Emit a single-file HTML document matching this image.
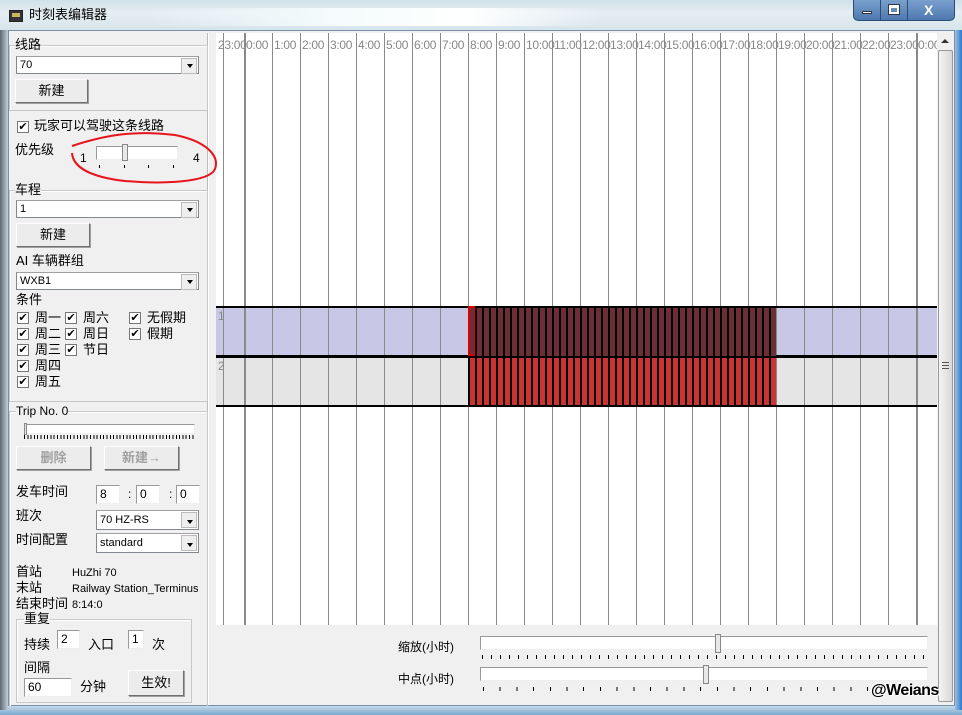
<!DOCTYPE html>
<html><head><meta charset="utf-8"><style>
*{margin:0;padding:0;box-sizing:border-box}
body{width:962px;height:715px;overflow:hidden;position:relative;background:#6a8fb8;font-family:"Liberation Sans","Noto Sans CJK SC",sans-serif;font-size:12px;color:#000}
.a{position:absolute}
.t{position:absolute;white-space:nowrap;line-height:14px}
.grp{position:absolute;border:1px solid #c8c8c8;box-shadow:inset 1px 1px #fff}
.combo{position:absolute;background:#fff;border:1px solid #828790;border-top-color:#a0a0a0;height:18px;font-size:11px;padding:1px 3px;line-height:14px}
.combo:after{content:"";position:absolute;right:1px;top:1px;width:14px;height:14px;background:#eee;border:1px solid #bbb}
.combo b{position:absolute;right:5px;top:7px;border:3px solid transparent;border-top:4px solid #000;z-index:2}
.btn{position:absolute;background:#ececec;border:1px solid #707070;border-top-color:#fff;border-left-color:#fff;box-shadow:1px 1px #a0a0a0;text-align:center;font-size:13px}
.cb{position:absolute;width:12px;height:12px;border:1px solid #777;background:#fff;font-size:11px;line-height:10px;text-align:center}
.cb:before{content:"✔";}
.edit{position:absolute;background:#fff;border:1px solid #999;border-right-color:#eee;border-bottom-color:#eee;font-size:12px;padding-left:3px;line-height:16px}
.hl{position:absolute;top:38px;font-size:12px;color:#888;letter-spacing:-0.3px}
</style></head><body>
<!-- title bar -->
<div class="a" style="left:0;top:0;width:962px;height:32px;background:linear-gradient(#cfe0ea,#e6eef2 40%,#d4e4ea)"></div>
<div class="a" style="left:150px;top:8px;width:450px;height:18px;background:linear-gradient(90deg,rgba(255,255,255,0),#f4fbfc 40%,#ffffff 70%,rgba(255,255,255,0));"></div>
<div class="a" style="left:9px;top:10px;width:14px;height:12px;background:#333;border:1px solid #222"><div class="a" style="left:2px;top:2px;width:8px;height:4px;background:#c9b460"></div></div>
<div class="t" style="left:29px;top:8px;font-size:13px">时刻表编辑器</div>
<div class="a" style="left:853px;top:0;width:102px;height:21px;background:linear-gradient(#7aa0cc,#4d78b0);border:1px solid #2c4c78;border-top:none;border-radius:0 0 5px 5px"></div>
<div class="a" style="left:880px;top:0;width:1px;height:20px;background:#2c4c78"></div>
<div class="a" style="left:907px;top:0;width:1px;height:20px;background:#2c4c78"></div>
<div class="a" style="left:862px;top:11px;width:10px;height:3px;background:#fff;border:1px solid #334"></div>
<div class="a" style="left:889px;top:5px;width:10px;height:9px;border:2px solid #fff;border-top-width:3px;outline:1px solid #334"></div>
<div class="t" style="left:924px;top:3px;color:#fff;font-weight:bold;font-size:14px">X</div>
<!-- client -->
<div class="a" style="left:8px;top:30px;width:947px;height:676px;background:#f0f0f0;border:1px solid #7a8fa8"></div>
<div class="a" style="left:0;top:706px;width:962px;height:9px;background:linear-gradient(#c9dbe8,#7aa6d0)"></div>
<div class="a" style="left:955px;top:30px;width:7px;height:680px;background:linear-gradient(90deg,#9ec0e0,#2a78d0)"></div>
<div class="a" style="left:0;top:30px;width:8px;height:680px;background:linear-gradient(90deg,#606870,#bfcfdc)"></div>

<!-- chart -->
<div class="a" style="left:216px;top:33px;width:721px;height:592px;background:#fff;overflow:hidden">
  <div class="a" style="left:0;top:274px;width:721px;height:50px;background:#c8c8e6"></div>
  <div class="a" style="left:0;top:324px;width:721px;height:49px;background:#e5e5e5"></div>
  <div class="a" style="left:0;top:0;width:721px;height:592px;background:repeating-linear-gradient(90deg,#8a8a8a 0 1px,transparent 1px 28px);background-position:28px 0"></div>
  <div class="a" style="left:28px;top:0;width:2px;height:592px;background:#8a8a8a"></div>
  <div class="a" style="left:700px;top:0;width:2px;height:592px;background:#8a8a8a"></div>
  <div class="a" style="left:0;top:0;width:721px;height:20px;background:#fff"></div>
  <div class="a" style="left:0;top:273px;width:721px;height:2px;background:#000"></div>
  <div class="a" style="left:0;top:322px;width:721px;height:3px;background:#000"></div>
  <div class="a" style="left:0;top:372px;width:721px;height:2px;background:#000"></div>
  <div class="a" style="left:252px;top:275px;width:308px;height:48px;background:repeating-linear-gradient(90deg,#000 0 2px,#6b2f35 2px 7px)"></div>
  <div class="a" style="left:252px;top:325px;width:308px;height:47px;background:repeating-linear-gradient(90deg,#000 0 2px,#cc3333 2px 7px)"></div>
  <div class="a" style="left:252px;top:273px;width:7px;height:50px;border:2px solid #d00;border-right-width:1px"></div>
  <div class="t" style="left:2px;top:276px;color:#888">1</div>
  <div class="t" style="left:2px;top:326px;color:#888">2</div>
</div>
<div class="a" style="left:216px;top:33px;width:721px;height:20px;overflow:hidden;background:#fff">
<div class="hl" style="left:2px;top:5px">23:00</div><div class="hl" style="left:30px;top:5px">0:00</div><div class="hl" style="left:58px;top:5px">1:00</div><div class="hl" style="left:86px;top:5px">2:00</div><div class="hl" style="left:114px;top:5px">3:00</div><div class="hl" style="left:142px;top:5px">4:00</div><div class="hl" style="left:170px;top:5px">5:00</div><div class="hl" style="left:198px;top:5px">6:00</div><div class="hl" style="left:226px;top:5px">7:00</div><div class="hl" style="left:254px;top:5px">8:00</div><div class="hl" style="left:282px;top:5px">9:00</div><div class="hl" style="left:310px;top:5px">10:00</div><div class="hl" style="left:338px;top:5px">11:00</div><div class="hl" style="left:366px;top:5px">12:00</div><div class="hl" style="left:394px;top:5px">13:00</div><div class="hl" style="left:422px;top:5px">14:00</div><div class="hl" style="left:450px;top:5px">15:00</div><div class="hl" style="left:478px;top:5px">16:00</div><div class="hl" style="left:506px;top:5px">17:00</div><div class="hl" style="left:534px;top:5px">18:00</div><div class="hl" style="left:562px;top:5px">19:00</div><div class="hl" style="left:590px;top:5px">20:00</div><div class="hl" style="left:618px;top:5px">21:00</div><div class="hl" style="left:646px;top:5px">22:00</div><div class="hl" style="left:674px;top:5px">23:00</div><div class="hl" style="left:702px;top:5px">0:00</div>
<div class="a" style="left:0;top:0;width:721px;height:20px;background:repeating-linear-gradient(90deg,#8a8a8a 0 1px,transparent 1px 28px);background-position:28px 0"></div>
<div class="a" style="left:28px;top:0;width:2px;height:20px;background:#8a8a8a"></div><div class="a" style="left:700px;top:0;width:2px;height:20px;background:#8a8a8a"></div>
</div>
<!-- scrollbar -->
<div class="a" style="left:937px;top:33px;width:17px;height:672px;background:#f0f0f0"></div>
<div class="a" style="left:941px;top:39px;border:4px solid transparent;border-bottom:4px solid #333;border-top:none"></div>
<div class="a" style="left:938px;top:50px;width:15px;height:652px;background:linear-gradient(90deg,#f4f4f4,#d8d8d8);border:1px solid #999;border-radius:2px"></div>
<div class="a" style="left:942px;top:362px;width:7px;height:7px;border-top:1px solid #555;border-bottom:1px solid #555"><div class="a" style="left:0;top:2px;width:7px;height:1px;background:#555"></div></div>

<!-- bottom panel -->
<div class="t" style="left:398px;top:640px">缩放(小时)</div>
<div class="a" style="left:480px;top:636px;width:448px;height:14px;background:#fff;border:1px solid #999;border-right-color:#eee;border-bottom-color:#eee"></div>
<div class="a" style="left:715px;top:634px;width:6px;height:19px;background:#e8e8e8;border:1px solid #888"></div>
<div class="a" style="left:482px;top:655px;width:445px;height:4px;background:repeating-linear-gradient(90deg,#000 0 1px,transparent 1px 9px)"></div>
<div class="t" style="left:398px;top:672px">中点(小时)</div>
<div class="a" style="left:480px;top:667px;width:448px;height:14px;background:#fff;border:1px solid #999;border-right-color:#eee;border-bottom-color:#eee"></div>
<div class="a" style="left:703px;top:665px;width:6px;height:19px;background:#e8e8e8;border:1px solid #888"></div>
<div class="a" style="left:483px;top:687px;width:400px;height:4px;background:repeating-linear-gradient(90deg,#000 0 1px,transparent 1px 16.7px)"></div>
<div class="t" style="left:871px;top:684px;font-size:16px;font-weight:bold;letter-spacing:-0.5px;color:#000;text-shadow:1px 1px #fff,-1px -1px #fff">@Weians</div>

<!-- left panel -->
<div class="a" style="left:207px;top:33px;width:2px;height:672px;border-left:1px solid #bbb;border-right:1px solid #fff"></div>
<div class="grp" style="left:9px;top:45px;width:199px;height:66px"></div>
<div class="t" style="left:15px;top:38px;background:#f0f0f0;font-size:13px">线路</div>
<div class="combo" style="left:16px;top:56px;width:183px">70<b></b></div>
<div class="btn" style="left:15px;top:79px;width:73px;height:24px;line-height:21px">新建</div>
<div class="cb" style="left:17px;top:121px"></div>
<div class="t" style="left:34px;top:119px;font-size:13px">玩家可以驾驶这条线路</div>
<div class="t" style="left:15px;top:143px;font-size:13px">优先级</div>
<div class="t" style="left:80px;top:151px">1</div>
<div class="a" style="left:96px;top:146px;width:82px;height:14px;background:#fff;border:1px solid #999;border-right-color:#eee;border-bottom-color:#eee"></div>
<div class="a" style="left:122px;top:144px;width:6px;height:17px;background:#e8e8e8;border:1px solid #888"></div>
<div class="a" style="left:99px;top:165px;width:1px;height:3px;background:#000"></div><div class="a" style="left:124px;top:165px;width:1px;height:3px;background:#000"></div><div class="a" style="left:148px;top:165px;width:1px;height:3px;background:#000"></div><div class="a" style="left:173px;top:165px;width:1px;height:3px;background:#000"></div>
<div class="t" style="left:193px;top:151px">4</div>
<svg class="a" style="left:65px;top:125px" width="155" height="62"><path d="M7 21 C40 10,70 5,110 10 C140 16,155 30,150 44 C144 58,95 59,60 56 C25 52,8 42,7 28" fill="none" stroke="#e8141c" stroke-width="2"/></svg>

<div class="grp" style="left:9px;top:190px;width:199px;height:212px"></div>
<div class="t" style="left:15px;top:183px;background:#f0f0f0;font-size:13px">车程</div>
<div class="combo" style="left:16px;top:200px;width:183px">1<b></b></div>
<div class="btn" style="left:16px;top:223px;width:74px;height:24px;line-height:21px">新建</div>
<div class="t" style="left:16px;top:254px;font-size:13px">AI 车辆群组</div>
<div class="combo" style="left:16px;top:272px;width:183px">WXB1<b></b></div>
<div class="t" style="left:16px;top:293px;font-size:13px">条件</div>
<div class="cb" style="left:17px;top:312px"></div><div class="t" style="left:35px;top:311px;font-size:13px">周一</div>
<div class="cb" style="left:65px;top:312px"></div><div class="t" style="left:83px;top:311px;font-size:13px">周六</div>
<div class="cb" style="left:129px;top:312px"></div><div class="t" style="left:147px;top:311px;font-size:13px">无假期</div>
<div class="cb" style="left:17px;top:328px"></div><div class="t" style="left:35px;top:327px;font-size:13px">周二</div>
<div class="cb" style="left:65px;top:328px"></div><div class="t" style="left:83px;top:327px;font-size:13px">周日</div>
<div class="cb" style="left:129px;top:328px"></div><div class="t" style="left:147px;top:327px;font-size:13px">假期</div>
<div class="cb" style="left:17px;top:344px"></div><div class="t" style="left:35px;top:343px;font-size:13px">周三</div>
<div class="cb" style="left:65px;top:344px"></div><div class="t" style="left:83px;top:343px;font-size:13px">节日</div>
<div class="cb" style="left:17px;top:360px"></div><div class="t" style="left:35px;top:359px;font-size:13px">周四</div>
<div class="cb" style="left:17px;top:376px"></div><div class="t" style="left:35px;top:375px;font-size:13px">周五</div>

<div class="grp" style="left:9px;top:411px;width:199px;height:295px;border-bottom:none"></div>
<div class="t" style="left:16px;top:404px;background:#f0f0f0">Trip No. 0</div>
<div class="a" style="left:24px;top:424px;width:171px;height:10px;background:#fff;border:1px solid #999;border-right-color:#eee;border-bottom-color:#eee"></div>
<div class="a" style="left:24px;top:423px;width:3px;height:12px;background:#e8e8e8;border:1px solid #888"></div>
<div class="a" style="left:24px;top:435px;width:171px;height:4px;background:repeating-linear-gradient(90deg,#000 0 1px,transparent 1px 3.3px)"></div>
<div class="btn" style="left:16px;top:446px;width:75px;height:24px;line-height:21px;color:#a0a0a0;font-weight:bold">删除</div>
<div class="btn" style="left:104px;top:446px;width:75px;height:24px;line-height:21px;color:#a0a0a0;font-weight:bold">新建→</div>
<div class="t" style="left:16px;top:485px;font-size:13px">发车时间</div>
<div class="edit" style="left:96px;top:485px;width:24px;height:19px">8</div>
<div class="t" style="left:128px;top:487px">:</div>
<div class="edit" style="left:136px;top:485px;width:24px;height:19px">0</div>
<div class="t" style="left:169px;top:487px">:</div>
<div class="edit" style="left:176px;top:485px;width:24px;height:19px">0</div>
<div class="t" style="left:16px;top:509px;font-size:13px">班次</div>
<div class="combo" style="left:96px;top:510px;width:103px;height:20px;line-height:16px">70 HZ-RS<b style="top:9px"></b></div>
<div class="t" style="left:16px;top:533px;font-size:13px">时间配置</div>
<div class="combo" style="left:96px;top:533px;width:103px;height:20px;line-height:16px">standard<b style="top:9px"></b></div>
<div class="t" style="left:16px;top:565px;font-size:13px">首站</div><div class="t" style="left:72px;top:566px;font-size:11px">HuZhi 70</div>
<div class="t" style="left:16px;top:581px;font-size:13px">末站</div><div class="t" style="left:72px;top:582px;font-size:11px">Railway Station_Terminus</div>
<div class="t" style="left:16px;top:597px;font-size:13px">结束时间</div><div class="t" style="left:72px;top:598px;font-size:11px">8:14:0</div>
<div class="grp" style="left:16px;top:619px;width:176px;height:84px"></div>
<div class="t" style="left:24px;top:612px;background:#f0f0f0;font-size:13px">重复</div>
<div class="t" style="left:24px;top:638px;font-size:13px">持续</div>
<div class="edit" style="left:57px;top:630px;width:23px;height:19px">2</div>
<div class="t" style="left:88px;top:638px;font-size:13px">入口</div>
<div class="edit" style="left:128px;top:630px;width:16px;height:19px">1</div>
<div class="t" style="left:152px;top:638px;font-size:13px">次</div>
<div class="t" style="left:24px;top:661px;font-size:13px">间隔</div>
<div class="edit" style="left:24px;top:678px;width:48px;height:19px">60</div>
<div class="t" style="left:80px;top:680px;font-size:13px">分钟</div>
<div class="btn" style="left:128px;top:670px;width:56px;height:26px;line-height:23px">生效!</div>
</body></html>
